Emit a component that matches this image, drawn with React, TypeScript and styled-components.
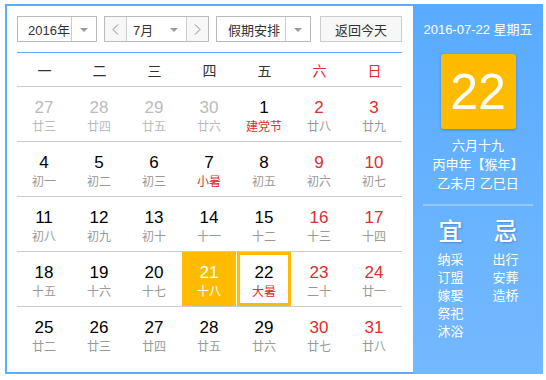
import React from "react";
import styled, { createGlobalStyle, css } from "styled-components";

const Global = createGlobalStyle`
  html, body { margin: 0; padding: 0; background: #fff; }
  body { font-family: "Liberation Sans", "Noto Sans CJK SC", sans-serif; }
`;

const BLUE = "#5aacff";
const RED = "#e02d2d";
const YELLOW = "#ffbb00";
const CJK = `"Liberation Sans", "Noto Sans CJK SC", sans-serif`;

const Frame = styled.div`
  display: flex;
  margin: 4px 0 0 5px;
  width: 538px;
  height: 370px;
`;

const Main = styled.div`
  box-sizing: border-box;
  width: 408px;
  height: 370px;
  border: 2px solid ${BLUE};
  border-right: none;
  padding: 10px 11px 0 10px;
  background: #fff;
`;

const Toolbar = styled.div`
  display: flex;
  align-items: stretch;
  height: 26px;
  margin-bottom: 10px;
  font-family: ${CJK};
  font-size: 13px;
  color: #333;
`;

const Select = styled.div<{ $w: number; $mr: number }>`
  box-sizing: border-box;
  display: flex;
  width: ${(p) => p.$w}px;
  margin-right: ${(p) => p.$mr}px;
  border: 1px solid #bbb;
  background: #fff;
`;

const SelectText = styled.div<{ $pl: number }>`
  flex: 1;
  display: flex;
  align-items: center;
  padding-left: ${(p) => p.$pl}px;
`;

const ArrowBox = styled.div<{ $sep?: boolean }>`
  width: 24px;
  display: flex;
  align-items: center;
  justify-content: center;
  border-left: ${(p) => (p.$sep ? "1px solid #ccc" : "none")};
`;

const Caret = styled.span`
  width: 0;
  height: 0;
  border-left: 4px solid transparent;
  border-right: 4px solid transparent;
  border-top: 4px solid #999;
  margin-top: 1px;
`;

const NavBtn = styled.div<{ $side: "l" | "r" }>`
  width: 21px;
  display: flex;
  align-items: center;
  justify-content: center;
  background: #f7f7f7;
  ${(p) =>
    p.$side === "l"
      ? css`border-right: 1px solid #ccc;`
      : css`border-left: 1px solid #ccc;`}
`;

const TodayBtn = styled.div`
  box-sizing: border-box;
  width: 82px;
  display: flex;
  align-items: center;
  justify-content: center;
  border: 1px solid #ccc;
  background: #f7f7f7;
`;

const Header = styled.div`
  display: grid;
  grid-template-columns: repeat(7, 55px);
  height: 33px;
  border-top: 1px solid ${BLUE};
  border-bottom: 1px solid #ccc;
  font-family: ${CJK};
  font-size: 14px;
`;

const HeadCell = styled.div<{ $red?: boolean }>`
  display: flex;
  align-items: center;
  justify-content: center;
  color: ${(p) => (p.$red ? RED : "#333")};
`;

const Week = styled.div<{ $last?: boolean }>`
  display: grid;
  grid-template-columns: repeat(7, 55px);
  height: 54px;
  border-bottom: ${(p) => (p.$last ? "none" : "1px solid #ccc")};
`;

const Cell = styled.div<{ $today?: boolean; $sel?: boolean }>`
  box-sizing: border-box;
  width: 54px;
  height: 54px;
  display: flex;
  flex-direction: column;
  align-items: center;
  padding-top: ${(p) => (p.$sel ? 9 : 12)}px;
  background: ${(p) => (p.$today ? YELLOW : "transparent")};
  border: ${(p) => (p.$sel ? `3px solid ${YELLOW}` : "none")};
`;

const Num = styled.div<{ $c: string }>`
  font-family: "Liberation Sans", Arial, sans-serif;
  font-size: 17px;
  line-height: 18px;
  color: ${(p) => p.$c};
`;

const Lunar = styled.div<{ $c: string }>`
  margin-top: 2px;
  font-family: ${CJK};
  font-size: 12px;
  line-height: 16px;
  color: ${(p) => p.$c};
`;

const Panel = styled.div`
  width: 130px;
  height: 370px;
  background: linear-gradient(180deg, #59abff 0%, #74b9ff 100%);
  display: flex;
  flex-direction: column;
  align-items: center;
  color: #fff;
  font-family: ${CJK};
`;

const DateLine = styled.div`
  margin-top: 16px;
  font-size: 13px;
  line-height: 20px;
`;

const BigDay = styled.div`
  margin-top: 14px;
  width: 75px;
  height: 75px;
  border-radius: 3px;
  background: ${YELLOW};
  box-shadow: 0 1px 3px rgba(0, 0, 0, 0.25);
  display: flex;
  align-items: center;
  justify-content: center;
  font-family: "Liberation Sans", Arial, sans-serif;
  font-size: 50px;
  line-height: 1;
`;

const LunarInfo = styled.div`
  margin-top: 7px;
  font-size: 13px;
  line-height: 19px;
  text-align: center;
`;

const Divider = styled.div`
  margin-top: 11px;
  width: 110px;
  height: 2px;
  background: rgba(255, 255, 255, 0.3);
`;

const YiJi = styled.div`
  display: grid;
  grid-template-columns: 55px 55px;
  margin-top: 11px;
`;

const YiCol = styled.div`
  display: flex;
  flex-direction: column;
  align-items: center;
`;

const YiTitle = styled.div`
  font-size: 24px;
  line-height: 30px;
  font-weight: 500;
  text-shadow: 1px 1px 2px rgba(0, 40, 110, 0.3);
  margin-bottom: 4px;
`;

const YiItem = styled.div`
  font-size: 13px;
  line-height: 18px;
`;

const Chevron = ({ dir }: { dir: "l" | "r" }) => (
  <svg width="7" height="11" viewBox="0 0 7 11">
    <polyline
      points={dir === "l" ? "6,0.5 1,5.5 6,10.5" : "1,0.5 6,5.5 1,10.5"}
      fill="none"
      stroke="#888"
      strokeWidth="1"
    />
  </svg>
);

type Day = { n: number; l: string; prev?: boolean; hol?: boolean };

const days: Day[] = [
  { n: 27, l: "廿三", prev: true },
  { n: 28, l: "廿四", prev: true },
  { n: 29, l: "廿五", prev: true },
  { n: 30, l: "廿六", prev: true },
  { n: 1, l: "建党节", hol: true },
  { n: 2, l: "廿八" },
  { n: 3, l: "廿九" },
  { n: 4, l: "初一" },
  { n: 5, l: "初二" },
  { n: 6, l: "初三" },
  { n: 7, l: "小暑", hol: true },
  { n: 8, l: "初五" },
  { n: 9, l: "初六" },
  { n: 10, l: "初七" },
  { n: 11, l: "初八" },
  { n: 12, l: "初九" },
  { n: 13, l: "初十" },
  { n: 14, l: "十一" },
  { n: 15, l: "十二" },
  { n: 16, l: "十三" },
  { n: 17, l: "十四" },
  { n: 18, l: "十五" },
  { n: 19, l: "十六" },
  { n: 20, l: "十七" },
  { n: 21, l: "十八" },
  { n: 22, l: "大暑", hol: true },
  { n: 23, l: "二十" },
  { n: 24, l: "廿一" },
  { n: 25, l: "廿二" },
  { n: 26, l: "廿三" },
  { n: 27, l: "廿四" },
  { n: 28, l: "廿五" },
  { n: 29, l: "廿六" },
  { n: 30, l: "廿七" },
  { n: 31, l: "廿八" },
];

const weeks: Day[][] = [];
for (let i = 0; i < days.length; i += 7) weeks.push(days.slice(i, i + 7));

const heads = ["一", "二", "三", "四", "五", "六", "日"];

export default function App() {
  return (
    <>
      <Global />
      <Frame>
        <Main>
          <Toolbar>
            <Select $w={80} $mr={7}>
              <SelectText $pl={10}>2016年</SelectText>
              <ArrowBox $sep>
                <Caret />
              </ArrowBox>
            </Select>
            <Select $w={105} $mr={7}>
              <NavBtn $side="l">
                <Chevron dir="l" />
              </NavBtn>
              <SelectText $pl={6}>7月</SelectText>
              <ArrowBox>
                <Caret />
              </ArrowBox>
              <NavBtn $side="r">
                <Chevron dir="r" />
              </NavBtn>
            </Select>
            <Select $w={95} $mr={9}>
              <SelectText $pl={11}>假期安排</SelectText>
              <ArrowBox $sep>
                <Caret />
              </ArrowBox>
            </Select>
            <TodayBtn>返回今天</TodayBtn>
          </Toolbar>
          <Header>
            {heads.map((h, i) => (
              <HeadCell key={h} $red={i >= 5}>
                {h}
              </HeadCell>
            ))}
          </Header>
          {weeks.map((w, wi) => (
            <Week key={wi} $last={wi === weeks.length - 1}>
              {w.map((d, di) => {
                const today = !d.prev && d.n === 21;
                const sel = !d.prev && d.n === 22;
                const numC = d.prev
                  ? "#bbb"
                  : today
                  ? "#fff"
                  : di >= 5
                  ? RED
                  : "#000";
                const lunC = d.prev
                  ? "#bbb"
                  : today
                  ? "#fff"
                  : d.hol
                  ? RED
                  : "#999";
                return (
                  <Cell key={di} $today={today} $sel={sel}>
                    <Num $c={numC}>{d.n}</Num>
                    <Lunar $c={lunC}>{d.l}</Lunar>
                  </Cell>
                );
              })}
            </Week>
          ))}
        </Main>
        <Panel>
          <DateLine>2016-07-22 星期五</DateLine>
          <BigDay>22</BigDay>
          <LunarInfo>
            六月十九
            <br />
            丙申年【猴年】
            <br />
            乙未月 乙巳日
          </LunarInfo>
          <Divider />
          <YiJi>
            <YiCol>
              <YiTitle>宜</YiTitle>
              {["纳采", "订盟", "嫁娶", "祭祀", "沐浴"].map((t) => (
                <YiItem key={t}>{t}</YiItem>
              ))}
            </YiCol>
            <YiCol>
              <YiTitle>忌</YiTitle>
              {["出行", "安葬", "造桥"].map((t) => (
                <YiItem key={t}>{t}</YiItem>
              ))}
            </YiCol>
          </YiJi>
        </Panel>
      </Frame>
    </>
  );
}
